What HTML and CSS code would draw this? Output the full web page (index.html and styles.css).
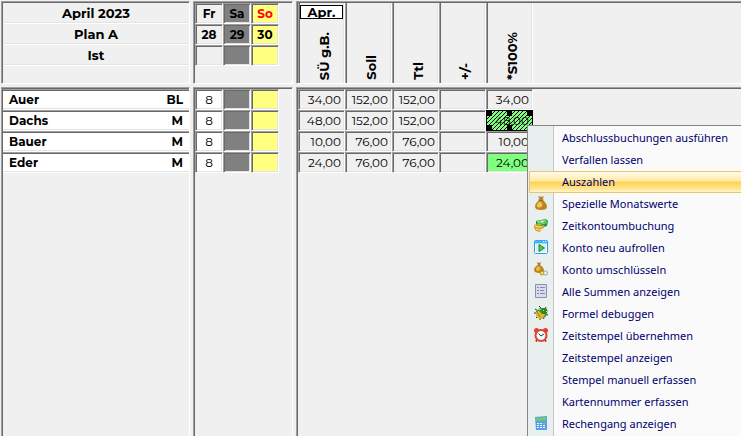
FILE: index.html
```html
<!DOCTYPE html>
<html lang="de">
<head>
    <meta charset="UTF-8">
    <meta name="viewport" content="width=device-width, initial-scale=1.0">
    <title>Dienstplan April 2023</title>
    <link rel="stylesheet" href="styles.css">
</head>
<body>
    <main class="plan">
        <section class="pane head">
            <div class="title">April 2023</div>
            <div class="title">Plan A</div>
            <div class="title">Ist</div>
        </section>
        <section class="pane head">
            <table class="days">
                <tr><th>Fr</th><th class="sa">Sa</th><th class="so red">So</th></tr>
                <tr><th>28</th><th class="sa">29</th><th class="so">30</th></tr>
                <tr><td></td><td class="sa"></td><td class="so"></td></tr>
            </table>
        </section>
        <section class="pane head sums-pane">
            <table class="sums sum-head">
                <tr>
                    <th><div class="col-head"><span class="month">Apr.</span><span class="vertical">SÜ g.B.</span></div></th>
                    <th><div class="col-head"><span class="vertical">Soll</span></div></th>
                    <th><div class="col-head"><span class="vertical">Ttl</span></div></th>
                    <th><div class="col-head"><span class="vertical">+/-</span></div></th>
                    <th><div class="col-head"><span class="vertical">*S100%</span></div></th>
                </tr>
            </table>
        </section>

        <section class="pane">
            <table class="names">
                <tr><th>Auer</th><td>BL</td></tr>
                <tr><th>Dachs</th><td>M</td></tr>
                <tr><th>Bauer</th><td>M</td></tr>
                <tr><th>Eder</th><td>M</td></tr>
            </table>
        </section>
        <section class="pane">
            <table class="days shifts">
                <tr><td>8</td><td class="sa"></td><td class="so"></td></tr>
                <tr><td>8</td><td class="sa"></td><td class="so"></td></tr>
                <tr><td>8</td><td class="sa"></td><td class="so"></td></tr>
                <tr><td>8</td><td class="sa"></td><td class="so"></td></tr>
            </table>
        </section>
        <section class="pane sums-pane">
            <table class="sums">
                <tr><td>34,00</td><td>152,00</td><td>152,00</td><td></td><td>34,00</td></tr>
                <tr><td>48,00</td><td>152,00</td><td>152,00</td><td></td><td class="selected">48,00</td></tr>
                <tr><td>10,00</td><td>76,00</td><td>76,00</td><td></td><td>10,00</td></tr>
                <tr><td>24,00</td><td>76,00</td><td>76,00</td><td></td><td class="green">24,00</td></tr>
            </table>
        </section>
    </main>

    <nav class="menu">
        <button class="item"><span class="icon"></span>Abschlussbuchungen ausführen</button>
        <button class="item"><span class="icon"></span>Verfallen lassen</button>
        <button class="item active"><span class="icon"></span>Auszahlen</button>
        <button class="item">
            <span class="icon"><svg width="14" height="14" viewBox="0 0 14 14">
                <path d="M4 0l2 1 1-1 1 1 2-1-1.500 3.500h-3z" fill="#b8862a"/>
                <path d="M5.500 4h3c2 1.500 4.500 3.500 4.500 6.500 0 2.500-2 3.500-6 3.500s-6-1-6-3.500C1 7.500 3.500 5.500 5.500 4z" fill="#bd8420"/>
                <path d="M5 6c-2 1.500-2.500 3-2 4.500 1 1.500 4 1.500 5-.5S7 5 5 6z" fill="#eec45c"/>
                <path d="M4.500 4h5" stroke="#795015"/>
            </svg></span>Spezielle Monatswerte
        </button>
        <button class="item">
            <span class="icon"><svg width="14" height="14" viewBox="0 0 14 14">
                <path d="M2 3l10-2 2 2-1 5-7 2-4-3z" fill="#24963b"/>
                <path d="M3 3l9-1.500.500 2L4 6z" fill="#7fd870"/>
                <path d="M4 7l9-2.500" stroke="#8fdc80"/>
                <path d="M7 3.500l2-.5 1 1-2 .5z" fill="#fff"/>
                <path d="M0 7l3-1 4 2 3-1v3l-3 1-1 3-4-1-2-3z" fill="#d8a62b"/>
                <path d="M1 8l3 1 4-.5M2 11l4 1" stroke="#fae18a" fill="none"/>
            </svg></span>Zeitkontoumbuchung
        </button>
        <button class="item">
            <span class="icon"><svg width="14" height="14" viewBox="0 0 14 14">
                <rect x=".5" y=".5" width="13" height="13" rx="1" fill="#fff" stroke="#1fa0f5"/>
                <path d="M1 2h12" stroke="#48b2f8" stroke-width="3"/>
                <path d="M9 1.500h1M11 1.500h1" stroke="#fff"/>
                <rect x="2" y="4" width="10" height="8" fill="#dcebf5"/>
                <path d="M5 4.500v7L10.500 8z" fill="#55c84b" stroke="#238b2b"/>
            </svg></span>Konto neu aufrollen
        </button>
        <button class="item">
            <span class="icon"><svg width="14" height="14" viewBox="0 0 14 14">
                <path d="M3 0l2 1 2-1-1 3H4z" fill="#ab741e"/>
                <path d="M4 3h2c2 1 4 3 4 5.500 0 2-2 2.500-5 2.500S0 10 0 8c0-2.500 2-4 4-5z" fill="#bd8420"/>
                <path d="M3.500 4.500C1.500 6 1.500 9 4 9s4-5-.5-4.500z" fill="#e9b94d"/>
                <circle cx="8" cy="11" r="2" fill="#f7df65" stroke="#aa8b1d"/>
                <circle cx="11.500" cy="11" r="2" fill="#eef0ee" stroke="#a5a797"/>
            </svg></span>Konto umschlüsseln
        </button>
        <button class="item">
            <span class="icon"><svg width="14" height="14" viewBox="0 0 14 14">
                <path d="M1.500.5h11v13h-11z" fill="#d9dcec" stroke="#8b8eac"/>
                <path d="M3 3.500h2M6 3.500h5M3 6.500h2M6 6.500h4M3 9.500h2M6 9.500h5" stroke="#8588aa"/>
            </svg></span>Alle Summen anzeigen
        </button>
        <button class="item">
            <span class="icon"><svg width="14" height="14" viewBox="0 0 14 14">
                <path d="M1 3l3 2M0 7h3M2 12l2-2M6 14v-2M10 13l-1-2M14 9l-3-1M5 0l2 2M12 1l-1 2" stroke="#39351d" fill="none"/>
                <path d="M2 5l4-3 5 0 2 3v4l-3 3-4 1-3-2-1-3z" fill="#3e9a34"/>
                <path d="M2 6l3-1 3 3 3 0-2 4-3 1-3-2-1-2z" fill="#e3b72c"/>
                <circle cx="10.500" cy="5" r="3" fill="#2f8134"/>
                <path d="M4 4l3-1" stroke="#9bdc72"/>
                <path d="M9 4.500h1M12 5.500h1" stroke="#d8e86b"/>
                <path d="M3 6l3 5" stroke="#a87a1a"/>
            </svg></span>Formel debuggen
        </button>
        <button class="item">
            <span class="icon"><svg width="14" height="14" viewBox="0 0 14 14">
                <path d="M3 12l-1 1.500M11 12l1 1.500" stroke="#b72b1c" stroke-width="2"/>
                <circle cx="2.500" cy="2.500" r="2.500" fill="#e2412e"/>
                <circle cx="11.500" cy="2.500" r="2.500" fill="#e2412e"/>
                <circle cx="7" cy="7.500" r="5.500" fill="#f4fafb" stroke="#e2412e" stroke-width="2"/>
                <path d="M4.500 5.500L7 8l3-2" stroke="#293f48" fill="none"/>
            </svg></span>Zeitstempel übernehmen
        </button>
        <button class="item"><span class="icon"></span>Zeitstempel anzeigen</button>
        <button class="item"><span class="icon"></span>Stempel manuell erfassen</button>
        <button class="item"><span class="icon"></span>Kartennummer erfassen</button>
        <button class="item">
            <span class="icon"><svg width="14" height="14" viewBox="0 0 14 14">
                <path d="M1 1l12-1v14H2z" fill="#55a3e5"/>
                <path d="M2 2l10-1v3L2 5z" fill="#70cc67"/>
                <path d="M3 7.500h9M3 9.500h9M3 11.500h9" stroke="#eef7ff" stroke-dasharray="2 1"/>
                <path d="M9 7.500h2" stroke="#e7a34a"/>
            </svg></span>Rechengang anzeigen
        </button>
    </nav>
</body>
</html>
```
FILE: styles.css
```css
* {
    box-sizing: border-box;
}

body {
    margin: 0;
    height: 100vh;
    overflow: hidden;
    background-color: #f0f0f0;
    color: #000;
    font-family: Montserrat, Inter, sans-serif;
    font-size: 12px;
    line-height: 18px;
}

.plan {
    display: grid;
    grid-template-columns: 189px 100px 1fr;
    grid-template-rows: 83px 1fr;
    gap: 3px;
    height: 100vh;
    padding: 1px 0 0 1px;
}

.pane {
    border-top: 1px solid #a0a0a0;
    border-left: 1px solid #a0a0a0;
    border-right: 1px solid #fff;
    box-shadow: inset 1px 1px #696969;
    padding: 1px 0 0 1px;
    overflow: hidden;
}

.head {
    border-bottom: 1px solid #fff;
}

.sums-pane {
    border-right: 0;
}

.title {
    height: 21px;
    border-bottom: 1px solid #fff;
    box-shadow: inset 0 -1px #e3e3e3;
    font-size: 13px;
    font-weight: bold;
    line-height: 20px;
    text-align: center;
}

table {
    table-layout: fixed;
    border-spacing: 0;
}

/* sunken cell edge */
th, td {
    height: 21px;
    padding: 0;
    border: 1px solid;
    border-color: #a0a0a0 #fff #fff #a0a0a0;
    box-shadow: inset 1px 1px #696969, inset -1px -1px #e3e3e3;
    text-align: center;
}

.days {
    width: 84px;
}

.sa {
    background-color: #808080;
}

.so {
    background-color: #ffff80;
}

.red {
    color: #f00;
}

.shifts td:first-child {
    background-color: #fff;
}

.names {
    width: 100%;
}

.names th, .names td {
    background-color: #fff;
    border-left: 0;
    border-right: 0;
    box-shadow: inset 0 1px #696969, inset 0 -1px #e3e3e3;
    font-weight: bold;
}

.names th {
    padding-left: 6px;
    text-align: left;
}

.names td {
    padding-right: 6px;
    text-align: right;
}

.sums {
    width: 235px;
}

.sums td {
    padding-right: 3px;
    text-align: right;
}

.sum-head th {
    height: 80px;
    border-top: 0;
    border-bottom: 0;
    box-shadow: inset 1px 0 #696969, inset -1px 0 #e3e3e3;
}

.col-head {
    display: flex;
    flex-direction: column;
    align-items: center;
    justify-content: flex-end;
    height: 80px;
    padding: 2px 1px 3px;
    font-size: 13px;
}

.month {
    align-self: stretch;
    margin-bottom: auto;
    border: 1px solid #000;
    background-color: #fff;
    line-height: 12px;
}

.vertical {
    margin-left: 4px;
    writing-mode: vertical-rl;
    transform: rotate(180deg);
    white-space: nowrap;
}

.sums .green {
    background-color: #80ff80;
}

/* hatched cell with a thick dashed focus frame */
.sums .selected {
    border-color: #000;
    box-shadow: none;
    background-image:
        repeating-linear-gradient(90deg, #000 0 5px, transparent 5px 20px),
        repeating-linear-gradient(90deg, #000 0 5px, transparent 5px 20px),
        linear-gradient(135deg, #000 12%, #80ff80 12% 38%, #000 38% 62%, #80ff80 62% 88%, #000 88%);
    background-size: 100% 5px, 100% 5px, 4px 4px;
    background-position: 0 0, 0 100%, 0 0;
    background-repeat: no-repeat, no-repeat, repeat;
}

/* context menu lies over the plan */
.menu {
    position: absolute;
    top: 125px;
    left: 527px;
    right: 0;
    padding: 1px 0 1px 1px;
    border: 1px solid #868686;
    border-right: 0;
    border-bottom-color: #e0e0e0;
    background: linear-gradient(90deg, #e9eeee 25px, #c5c5c5 25px 26px, #fafafa 26px);
}

.item {
    display: flex;
    align-items: center;
    width: 100%;
    height: 22px;
    padding: 0 0 2px;
    border: 1px solid transparent;
    border-right: 0;
    background: none;
    color: #00006e;
    font-family: "Segoe UI", "Noto Sans", sans-serif;
    font-size: 11px;
    text-align: left;
    white-space: nowrap;
}

.item:hover, .active {
    border-color: #e3c878;
    background: linear-gradient(#fffbe8, #ffeaa8 45%, #ffd349 50%, #ffe695 85%, #fff6c8);
}

.icon {
    display: flex;
    flex: none;
    width: 32px;
    padding-left: 4px;
}
```
